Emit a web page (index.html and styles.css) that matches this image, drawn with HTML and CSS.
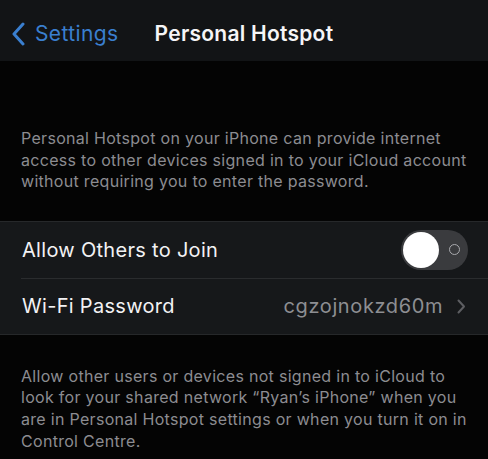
FILE: index.html
```html
<!DOCTYPE html>
<html>
<head>
<meta charset="utf-8">
<link rel="stylesheet" href="styles.css">
</head>
<body>
<header class="nav">
  <a class="back">
    <svg class="back-icon" width="14" height="24" viewBox="0 0 14 24"><path d="M12 2 L3 12 L12 22" fill="none" stroke="#3a7fcf" stroke-width="3" stroke-linecap="round" stroke-linejoin="round"/></svg>
    <span>Settings</span>
  </a>
  <h1 class="title">Personal Hotspot</h1>
</header>
<p class="note note-top">Personal Hotspot on your iPhone can provide internet access to other devices signed in to your iCloud account without requiring you to enter the password.</p>
<section class="group">
  <div class="row">
    <span class="label">Allow Others to Join</span>
    <span class="toggle"><span class="knob"></span><span class="off-mark"></span></span>
  </div>
  <div class="row">
    <span class="label">Wi-Fi Password</span>
    <span class="value">cgzojnokzd60m
      <svg class="chev" width="9" height="15" viewBox="0 0 9 15"><path d="M1.5 1.5 L7 7.5 L1.5 13.5" fill="none" stroke="#5d5e62" stroke-width="2" stroke-linecap="round" stroke-linejoin="round"/></svg>
    </span>
  </div>
</section>
<p class="note note-bottom">Allow other users or devices not signed in to iCloud to look for your shared network “Ryan’s iPhone” when you are in Personal Hotspot settings or when you turn it on in Control Centre.</p>
</body>
</html>
```
FILE: styles.css
```css
* { box-sizing: border-box; }
html, body {
  margin: 0;
  padding: 0;
  background: #040404;
  font-family: Inter, "Noto Sans", sans-serif;
  width: 488px;
  height: 459px;
  overflow: hidden;
}
.nav {
  height: 61px;
  background: #121416;
  display: flex;
  align-items: center;
  padding-left: 11px;
  padding-top: 6px;
}
.back {
  display: flex;
  align-items: center;
  color: #3a7fcf;
  font-size: 21px;
  letter-spacing: 0.4px;
  gap: 10px;
}
.title {
  margin: 0 0 0 36px;
  color: #f5f5f7;
  font-size: 21px;
  font-weight: 600;
  letter-spacing: 0.25px;
}
.note {
  margin: 0;
  color: #8c8c91;
  font-size: 16px;
  line-height: 21.6px;
  letter-spacing: 0.3px;
  padding: 0 18px 0 21px;
}
.note-top {
  padding-top: 67px;
  padding-bottom: 28px;
}
.note-bottom {
  padding-top: 31px;
  padding-right: 16px;
}
.group {
  background: #16181a;
  border-top: 1px solid #26282a;
  border-bottom: 1px solid #26282a;
  padding-left: 21px;
}
.row {
  height: 56px;
  display: flex;
  align-items: center;
  justify-content: space-between;
  padding-right: 21px;
}
.row + .row {
  border-top: 1px solid #2a2c2e;
}
.label {
  color: #f2f2f4;
  font-size: 20px;
  letter-spacing: 0.3px;
  padding-left: 1px;
}
.value {
  color: #8d8e92;
  font-size: 20px;
  letter-spacing: 0.6px;
  display: flex;
  align-items: center;
  gap: 14px;
  margin-right: 1px;
}
.toggle {
  width: 67px;
  height: 40px;
  border-radius: 20px;
  background: #3a3b3e;
  display: flex;
  align-items: center;
  padding: 0 2px;
  gap: 10px;
  margin-right: -1px;
}
.knob {
  width: 36px;
  height: 36px;
  border-radius: 50%;
  background: #ffffff;
}
.off-mark {
  width: 11px;
  height: 11px;
  border-radius: 50%;
  border: 1.5px solid #a9aaae;
}
```
